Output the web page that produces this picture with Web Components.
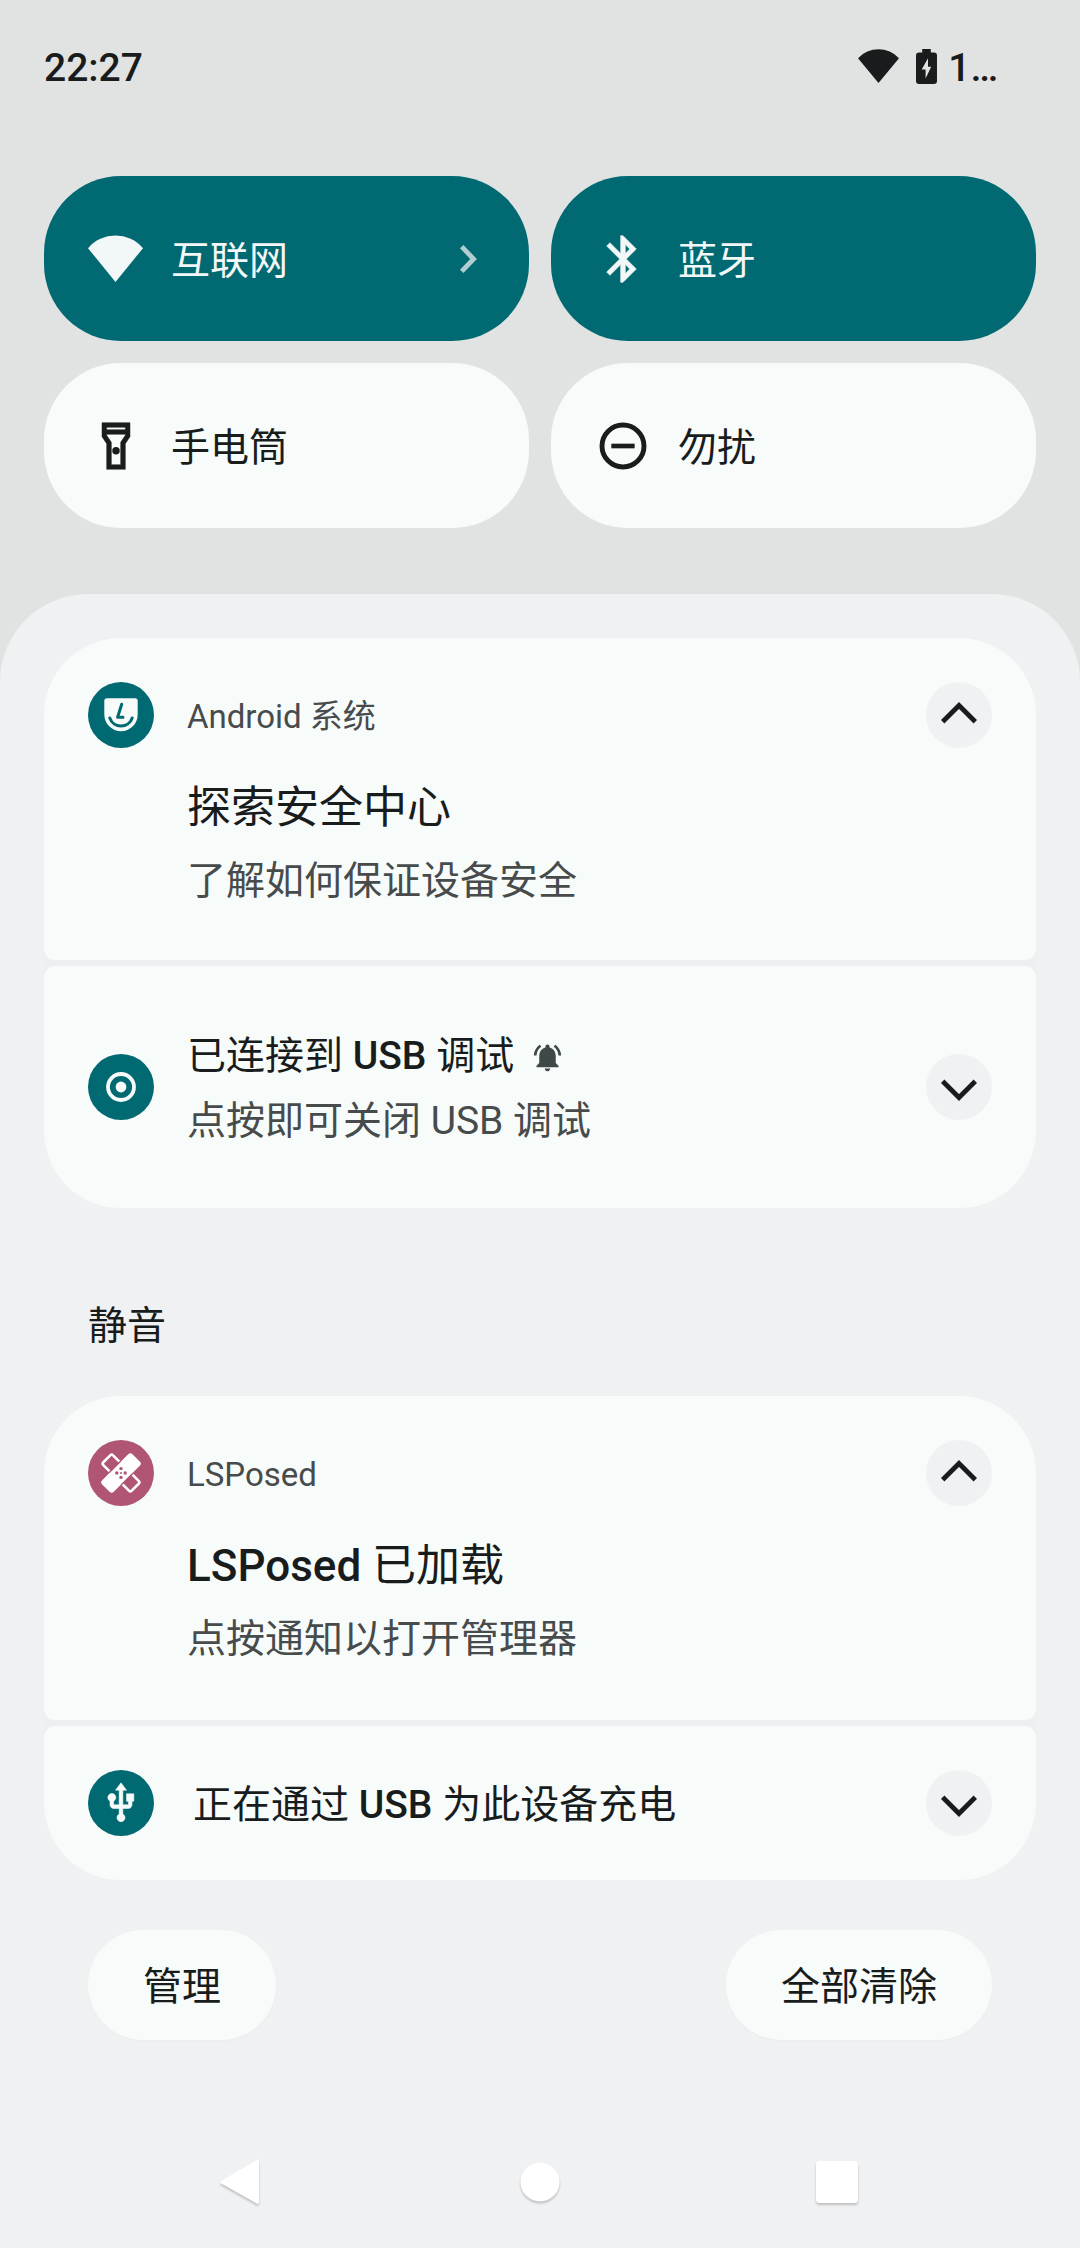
<!DOCTYPE html>
<html lang="zh-CN">
<head>
<meta charset="utf-8">
<title>通知栏</title>
<style>
html,body{margin:0;padding:0}
body{width:1080px;height:2248px;overflow:hidden;background:#e1e3e2;font-family:Roboto,"Noto Sans CJK SC",sans-serif;color:#191c1c}
</style>
</head>
<body>
<notification-shade></notification-shade>
<script>
const ICONS={
  wifi:'<svg width="55" height="47" viewBox="0 0 55 47"><path fill="currentColor" d="M0 13.2A36 36 0 0 1 55 13.2L27.5 47Z"/></svg>',
  wifiSmall:'<svg width="41" height="34" viewBox="0 0 41 34"><path fill="currentColor" d="M0 9.2A28 28 0 0 1 41 9.2L20.5 34Z"/></svg>',
  battery:'<svg width="21" height="35" viewBox="0 0 21 35"><path fill="currentColor" fill-rule="evenodd" d="M6.2 0h8.6v3.4H18a3 3 0 0 1 3 3V32a3 3 0 0 1-3 3H3a3 3 0 0 1-3-3V6.400a3 3 0 0 1 3-3H6.200ZM12 9.200 5.700 20.600H9.600V29.500L15.200 17.700H12Z"/></svg>',
  bluetooth:'<svg width="56" height="56" viewBox="0 0 24 24"><path fill="currentColor" stroke="currentColor" stroke-width=".25" d="M17.71 7.71L12 2h-1v7.59L6.41 5 5 6.41 10.59 12 5 17.59 6.41 19 11 14.41V22h1l5.71-5.71-4.3-4.29 4.3-4.29zM13 5.83l1.88 1.88L13 9.59V5.83zm1.88 10.46L13 18.17v-3.76l1.88 1.88z"/></svg>',
  flashlight:'<svg width="56" height="56" viewBox="0 0 24 24"><path fill="currentColor" stroke="currentColor" stroke-width=".2" d="M18 2H6v6l2 3v11h8V11l2-3V2zM16 4v1H8V4h8zM14 10.4V20h-4v-9.610l-2-3V7h8v.39L14 10.400z"/><circle cx="12" cy="14" r="1.6" fill="currentColor"/></svg>',
  dnd:'<svg width="56" height="56" viewBox="0 0 24 24"><circle cx="12" cy="12" r="9" fill="none" stroke="currentColor" stroke-width="2.100"/><path fill="currentColor" d="M7 11h10v2H7z"/></svg>',
  next:'<svg width="17" height="28" viewBox="0 0 17 28"><path fill="none" stroke="#b2cdd2" stroke-width="4.800" d="M1.700 1.700 13.600 14 1.700 26.300"/></svg>',
  up:'<svg width="36" height="22" viewBox="0 0 36 22"><path fill="none" stroke="#191c1c" stroke-width="4.800" d="M1.700 19.800 18 3.500 34.300 19.800"/></svg>',
  down:'<svg width="36" height="22" viewBox="0 0 36 22"><path fill="none" stroke="#191c1c" stroke-width="4.800" d="M1.700 2.200 18 18.500 34.300 2.200"/></svg>',
  safety:'<svg width="66" height="66" viewBox="0 0 66 66"><path fill="#f7fbfa" d="M19 16.300H47a2.700 2.700 0 0 1 2.700 2.700V32.500a16.700 16.700 0 0 1-33.400 0V19a2.700 2.700 0 0 1 2.700-2.700Z"/><path fill="none" stroke="#006972" stroke-width="3" stroke-linecap="round" stroke-linejoin="round" d="M21.800 36a11.800 11.800 0 0 0 22.400 0M33.700 22.200 29.600 35.200H35"/></svg>',
  target:'<svg width="66" height="66" viewBox="0 0 66 66"><circle cx="33" cy="33" r="13" fill="none" stroke="#f7fbfa" stroke-width="3.800"/><circle cx="33" cy="33" r="5.400" fill="#f7fbfa"/></svg>',
  patch:'<svg width="66" height="66" viewBox="0 0 66 66"><g transform="rotate(45 33 33)"><rect x="12.900" y="26.100" width="40.200" height="13.800" rx="2" fill="none" stroke="#fff" stroke-width="2.600"/></g><g transform="rotate(-45 33 33)"><rect x="11.600" y="24.800" width="42.800" height="16.400" rx="3" fill="#fff"/></g><g transform="rotate(45 33 33)" fill="none" stroke="#b05573" stroke-width="1.400"><path d="M24.300 24.600v16.800M41.700 24.600v16.800"/></g><g fill="#b05573"><circle cx="33" cy="28.600" r="1.700"/><circle cx="28.800" cy="33" r="1.700"/><circle cx="37.200" cy="33" r="1.700"/><circle cx="33" cy="37.400" r="1.700"/><circle cx="33" cy="33" r="1"/></g></svg>',
  usb:'<svg width="44" height="44" viewBox="0 0 24 24"><path fill="#f7fbfa" stroke="#f7fbfa" stroke-width=".3" d="M15 7v4h1v2h-3V5h2l-3-4-3 4h2v8H8v-2.070c.7-.37 1.200-1.080 1.200-1.930 0-1.210-.99-2.200-2.200-2.200-1.210 0-2.200.99-2.200 2.200 0 .85.5 1.560 1.200 1.930V13c0 1.110.89 2 2 2h3v3.050c-.71.37-1.200 1.100-1.200 1.950 0 1.220.99 2.200 2.200 2.200 1.210 0 2.200-.98 2.200-2.200 0-.85-.49-1.580-1.200-1.950V15h3c1.110 0 2-.89 2-2v-2h1V7h-4z"/></svg>',
  bell:'<svg width="33" height="33" viewBox="0 0 24 24"><path fill="#3f4848" d="M7.580 4.080L6.150 2.650C3.750 4.480 2.170 7.300 2.030 10.500h2c.15-2.650 1.510-4.970 3.550-6.420zm12.390 6.420h2c-.15-3.200-1.730-6.020-4.120-7.850l-1.420 1.430c2.020 1.450 3.390 3.770 3.540 6.420zM18 11c0-3.070-1.640-5.640-4.500-6.320V4c0-.83-.67-1.500-1.500-1.500s-1.500.67-1.500 1.500v.68C7.630 5.360 6 7.920 6 11v5l-2 2v1h16v-1l-2-2v-5zm-6 11c.14 0 .27-.01.4-.04.65-.14 1.180-.58 1.440-1.180.1-.24.15-.5.15-.78h-4c.01 1.100.9 2 2.010 2z"/></svg>',
  back:'<svg width="40" height="46" viewBox="0 0 40 46"><path fill="#fff" stroke="#fff" stroke-width="3" stroke-linejoin="round" d="M37.500 2.200V43.300L2 23.200Z"/></svg>',
  home:'<svg width="40" height="40" viewBox="0 0 40 40"><circle cx="20" cy="20" r="19.500" fill="#fff"/></svg>',
  recents:'<svg width="42" height="42" viewBox="0 0 42 42"><rect width="42" height="42" rx="3.500" fill="#fff"/></svg>'
};
const define=(name,markup)=>customElements.define(name,class extends HTMLElement{
  constructor(){
    super();
    this.attachShadow({mode:'open'}).innerHTML=typeof markup==='function'?markup(this):markup;
  }
});

define('ui-icon',el=>`<style>:host{display:flex;flex:none}svg{display:block;overflow:visible}</style>${ICONS[el.getAttribute('name')]}`);

define('status-bar',`<style>
:host{display:flex;align-items:center;box-sizing:border-box;height:132px;padding:0 82px 0 44px;font-size:39px;font-weight:500;line-height:46px}
.time{flex:1;padding-top:3px}
.battery{margin-left:17px}
.level{margin-left:11px;padding-top:3px}
</style><span class="time">22:27</span><ui-icon name="wifiSmall"></ui-icon><ui-icon class="battery" name="battery"></ui-icon><span class="level">1…</span>`);

define('qs-tile',`<style>
:host{display:flex;align-items:center;box-sizing:border-box;height:165px;padding:0 52px 0 38.500px;border-radius:77px;background:#f7fbfa;font-size:39px;line-height:46px}
:host([active]){background:#006972;color:#f2f7f8}
.icon{width:66px;display:flex;justify-content:center;margin-right:22.500px}
.label{flex:1;padding-top:5px}
</style><div class="icon"><slot name="icon"></slot></div><span class="label"><slot></slot></span><slot name="end"></slot>`);

define('icon-badge',`<style>
:host{display:flex;align-items:center;justify-content:center;flex:none;width:66px;height:66px;border-radius:50%;background:var(--badge,#006972)}
</style><slot></slot>`);

define('expand-button',el=>`<style>
:host{display:flex;align-items:center;justify-content:center;flex:none;width:66px;height:66px;border-radius:50%;background:#eff2f2;box-sizing:border-box}
:host([dir=up]){padding-bottom:5px}
:host([dir=down]){padding-top:5px}
</style><ui-icon name="${el.getAttribute('dir')}"></ui-icon>`);

define('notification-open',`<style>
:host{display:flex;align-items:flex-start;box-sizing:border-box;padding:44px 44px 0;background:#f7fbfa;border-radius:77px 77px 11px 11px}
.text{flex:1;margin-left:33px;display:flex;flex-direction:column}
.app{font-size:33px;line-height:40px;padding-top:15px;color:#474b4b}
.title{font-size:44px;line-height:52px;margin-top:45px}
.body{font-size:39px;line-height:46px;margin-top:24px;color:#474b4b}
</style><slot name="icon"></slot><div class="text"><span class="app"><slot name="app"></slot></span><span class="title"><slot name="title"></slot></span><span class="body"><slot></slot></span></div><expand-button dir="up"></expand-button>`);

define('notification-line',`<style>
:host{display:flex;align-items:center;box-sizing:border-box;padding:0 44px;background:#f7fbfa;border-radius:11px 11px 77px 77px;font-size:39px;line-height:46px}
.text{flex:1;margin-left:var(--inset,33px);padding-top:3px;display:flex;flex-direction:column;gap:19px}
.title{display:flex;align-items:center;gap:17px}
::slotted([slot=alert]){padding-top:2px}
::slotted([slot=body]){color:#474b4b}
</style><slot name="icon"></slot><div class="text"><div class="title"><span><slot></slot></span><slot name="alert"></slot></div><slot name="body"></slot></div><expand-button dir="down"></expand-button>`);

define('pill-button',`<style>
:host{display:flex;align-items:center;justify-content:center;box-sizing:border-box;height:110px;padding:3px 55px 0;border-radius:55px;background:#f7fbfa;font-size:39px;line-height:46px;box-shadow:0 1px 2px #e9eeec}
</style><slot></slot>`);

define('system-nav',`<style>
:host{display:flex;align-items:center;justify-content:space-between;padding:0 222px 0 220px;height:46px;filter:drop-shadow(0 2px 1px #00000035)}
.home{margin-left:4px}
</style><ui-icon name="back"></ui-icon><ui-icon class="home" name="home"></ui-icon><ui-icon name="recents"></ui-icon>`);

define('notification-shade',`<style>
:host{display:flex;flex-direction:column;height:2248px;background:#e1e3e2}
b{font-weight:500}
.tiles{display:grid;grid-template-columns:1fr 1fr;gap:22px;padding:44px 44px 66px}
.panel{flex:1;display:flex;flex-direction:column;box-sizing:border-box;padding-top:44px;border-radius:88px 88px 0 0;background:#eff1f3}
.group{display:flex;flex-direction:column;gap:6px;margin:0 44px;border-radius:77px;background:#edf0f0}
.first{height:322px}.second{height:242px}.third{height:324px}.fourth{height:154px;--inset:39px}
.silent{margin:0 88px;height:188px;padding-top:95px;box-sizing:border-box;font-size:39px;line-height:46px}
.actions{display:flex;justify-content:space-between;margin:50px 88px 0}
system-nav{margin-top:119px}
</style>
<status-bar></status-bar>
<div class="tiles">
<qs-tile active><ui-icon slot="icon" name="wifi"></ui-icon>互联网<ui-icon slot="end" name="next"></ui-icon></qs-tile>
<qs-tile active><ui-icon slot="icon" name="bluetooth"></ui-icon>蓝牙</qs-tile>
<qs-tile><ui-icon slot="icon" name="flashlight"></ui-icon>手电筒</qs-tile>
<qs-tile><ui-icon slot="icon" name="dnd"></ui-icon>勿扰</qs-tile>
</div>
<div class="panel">
<div class="group">
<notification-open class="first"><icon-badge slot="icon"><ui-icon name="safety"></ui-icon></icon-badge><span slot="app">Android 系统</span><span slot="title">探索安全中心</span>了解如何保证设备安全</notification-open>
<notification-line class="second"><icon-badge slot="icon"><ui-icon name="target"></ui-icon></icon-badge>已连接到 <b>USB</b> 调试<ui-icon slot="alert" name="bell"></ui-icon><span slot="body">点按即可关闭 USB 调试</span></notification-line>
</div>
<div class="silent">静音</div>
<div class="group">
<notification-open class="third"><icon-badge slot="icon" style="--badge:#b05573"><ui-icon name="patch"></ui-icon></icon-badge><span slot="app">LSPosed</span><span slot="title"><b>LSPosed</b> 已加载</span>点按通知以打开管理器</notification-open>
<notification-line class="fourth"><icon-badge slot="icon"><ui-icon name="usb"></ui-icon></icon-badge>正在通过 <b>USB</b> 为此设备充电</notification-line>
</div>
<div class="actions"><pill-button>管理</pill-button><pill-button>全部清除</pill-button></div>
<system-nav></system-nav>
</div>`);
</script>
</body>
</html>
